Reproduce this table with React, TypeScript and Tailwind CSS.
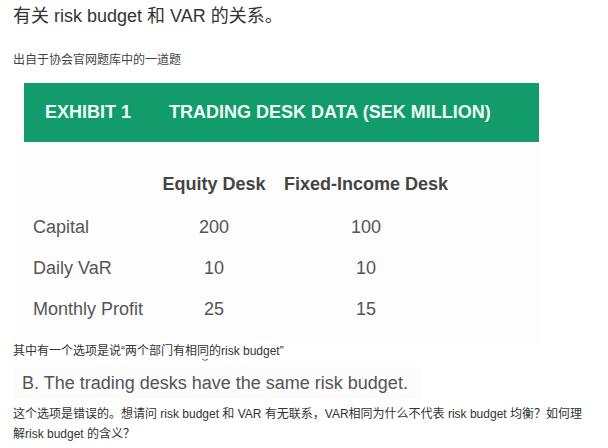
import React from "react";

const font = { fontFamily: '"Liberation Sans", Arial, "Noto Sans CJK SC", sans-serif' };

const rows: [string, string, string][] = [
  ["Capital", "200", "100"],
  ["Daily VaR", "10", "10"],
  ["Monthly Profit", "25", "15"],
];

export default function App() {
  return (
    <div className="w-[608px] h-[448px] bg-white overflow-hidden relative" style={font}>
      <div className="pl-[13px] pt-[3px]">
        <h1 className="text-[18px] leading-[26px] text-[#333] font-normal">有关 risk budget 和 VAR 的关系。</h1>
        <p className="mt-[23px] text-[12px] leading-[16px] text-[#444]">出自于协会官网题库中的一道题</p>
      </div>

      <div className="ml-[14px] mt-[15px] w-[526px] bg-[#fdfdfd] pb-[12px]">
        <div className="ml-[10px] mr-[1px] h-[59px] bg-[#139c6b] flex items-center text-[18px] font-bold text-[#eefaf4]">
          <span className="ml-[21px]">EXHIBIT 1</span>
          <span className="ml-[38px]">TRADING DESK DATA (SEK MILLION)</span>
        </div>
        <div className="mt-[29px] ml-[19px] grid grid-cols-[120px_122px_182px] text-[18px] text-[#555]">
          <div className="h-[36px]" />
          <div className="h-[36px] text-center font-bold text-[#444]">Equity Desk</div>
          <div className="h-[36px] text-center font-bold text-[#444]">Fixed-Income Desk</div>
          {rows.map(([a, b, c]) => (
            <React.Fragment key={a}>
              <div className="h-[41px] flex items-center">{a}</div>
              <div className="h-[41px] flex items-center justify-center">{b}</div>
              <div className="h-[41px] flex items-center justify-center">{c}</div>
            </React.Fragment>
          ))}
        </div>
      </div>

      <div className="pl-[13px] mt-[1px] relative">
        <p className="text-[12px] leading-[16px] text-[#333]">其中有一个选项是说“两个部门有相同的risk budget”</p>
        <svg className="absolute left-[201px] top-[15px]" width="8" height="4" viewBox="0 0 8 4">
          <path d="M1 1 Q4 4 7 1" stroke="#666" strokeWidth="1" fill="none" />
        </svg>
      </div>

      <div className="mt-[8px] ml-[14px] w-[408px] bg-[#fcfcfc] pl-[8px] py-[5px]">
        <p className="text-[18px] leading-[22px] text-[#555] whitespace-nowrap">B. The trading desks have the same risk budget.</p>
      </div>

      <div className="pl-[13px] mt-[5px] text-[12px] leading-[20px] text-[#333]">
        <p>这个选项是错误的。想请问 risk budget 和 VAR 有无联系，VAR相同为什么不代表 risk budget 均衡？如何理</p>
        <p>解risk budget 的含义？</p>
      </div>
    </div>
  );
}
